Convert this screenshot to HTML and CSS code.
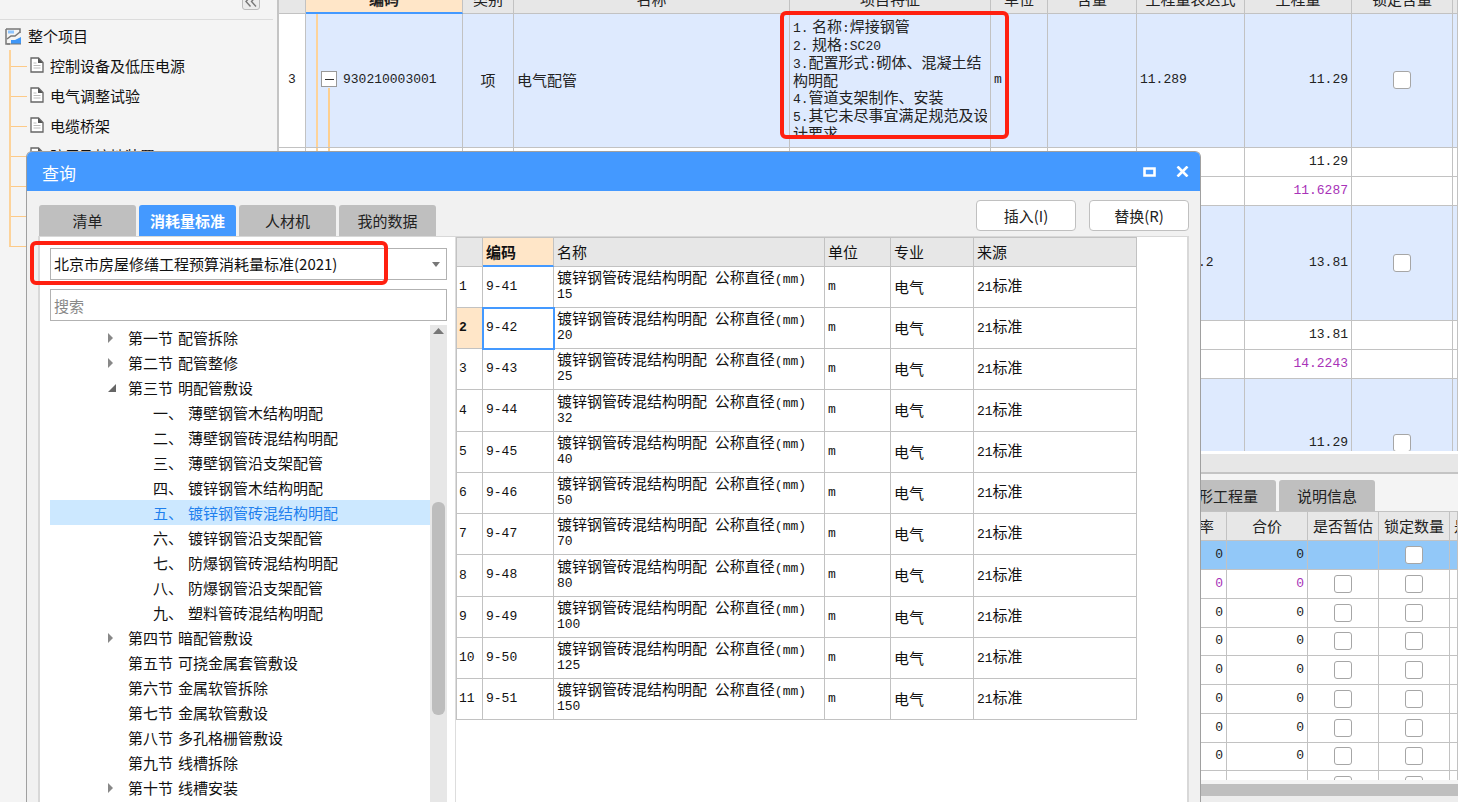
FILE: index.html
```html
<!DOCTYPE html>
<html lang="zh-CN">
<head>
<meta charset="utf-8">
<title>查询</title>
<link rel="stylesheet" href="styles.css">
</head>
<body>
<div class="app">
  <aside class="sidebar">
    <div class="sidebar-top">
      <button class="collapse" type="button" aria-label="收起">
        <svg width="14" height="14" viewBox="0 0 14 14" fill="none" stroke="#777" stroke-width="1.4"><path d="M6.500 1.500L2 6.500l4.500 5M12 1.500L7.500 6.500l4.500 5"/></svg>
      </button>
    </div>
    <div class="project">
      <svg width="17" height="17" viewBox="0 0 17 17"><path d="M1 1h14v4M1 1v15h4" fill="none" stroke="#777" stroke-width="1.500"/><path d="M3 2.500h6v3H3z" fill="#8cc4ff"/><path d="M2 11l4-3h4l5-4" fill="none" stroke="#777" stroke-width="1.500"/><path d="M6 16v-4h4l6-3v7z" fill="#3f97f8"/><path d="M2 16h14" stroke="#777"/></svg>
      <span>整个项目</span>
    </div>
    <ul class="project-tree">
      <li><svg class="doc" viewBox="0 0 14 16"><path d="M1 1h7.500L13 5.500V15H1z" fill="#fff" stroke="#666" stroke-width="1.300"/><path d="M8 1v5h5z" fill="#555"/><path d="M3.500 6h3M3.500 8.500h7M3.500 11h7" stroke="#bbb"/></svg>控制设备及低压电源</li>
      <li><svg class="doc" viewBox="0 0 14 16"><path d="M1 1h7.500L13 5.500V15H1z" fill="#fff" stroke="#666" stroke-width="1.300"/><path d="M8 1v5h5z" fill="#555"/><path d="M3.500 6h3M3.500 8.500h7M3.500 11h7" stroke="#bbb"/></svg>电气调整试验</li>
      <li><svg class="doc" viewBox="0 0 14 16"><path d="M1 1h7.500L13 5.500V15H1z" fill="#fff" stroke="#666" stroke-width="1.300"/><path d="M8 1v5h5z" fill="#555"/><path d="M3.500 6h3M3.500 8.500h7M3.500 11h7" stroke="#bbb"/></svg>电缆桥架</li>
      <li><svg class="doc" viewBox="0 0 14 16"><path d="M1 1h7.500L13 5.500V15H1z" fill="#fff" stroke="#666" stroke-width="1.300"/><path d="M8 1v5h5z" fill="#555"/><path d="M3.500 6h3M3.500 8.500h7M3.500 11h7" stroke="#bbb"/></svg>防雷及接地装置</li>
      <li></li>
      <li></li>
      <li></li>
    </ul>
  </aside>

  <main class="main">
    <div class="bill">
      <table class="grid bill-grid">
        <colgroup><col class="b-no"><col class="b-code"><col class="b-kind"><col><col class="b-feature"><col class="b-unit"><col class="b-content"><col class="b-expr"><col class="b-qty"><col class="b-lock"><col class="b-rest"></colgroup>
        <thead>
          <tr><th></th><th class="current">编码</th><th>类别</th><th>名称</th><th>项目特征</th><th>单位</th><th>含量</th><th>工程量表达式</th><th>工程量</th><th>锁定含量</th><th></th></tr>
        </thead>
        <tbody>
          <tr class="item first">
            <td class="rownum num">3</td>
            <td class="code num"><button class="toggle" type="button" aria-label="折叠"></button>930210003001</td>
            <td class="center">项</td><td>电气配管</td>
            <td class="feature">
              <div class="feature-text">
                <div><span class="num">1.</span> 名称<span class="num">:</span>焊接钢管</div>
                <div><span class="num">2.</span> 规格<span class="num">:SC20</span></div>
                <div><span class="num">3.</span>配置形式<span class="num">:</span>砌体、混凝土结</div>
                <div>构明配</div>
                <div><span class="num">4.</span>管道支架制作、安装</div>
                <div><span class="num">5.</span>其它未尽事宜满足规范及设</div>
                <div>计要求</div>
              </div>
              <div class="mark mark-feature"></div>
            </td>
            <td class="num">m</td><td></td><td class="num">11.289</td><td class="num right">11.29</td>
            <td class="center"><input type="checkbox" aria-label="锁定含量"></td><td></td>
          </tr>
          <tr class="sub"><td></td><td class="code"></td><td></td><td></td><td></td><td></td><td></td><td></td><td class="num right">11.29</td><td></td><td></td></tr>
          <tr class="sub"><td></td><td></td><td></td><td></td><td></td><td></td><td></td><td></td><td class="num right purple">11.6287</td><td></td><td></td></tr>
          <tr class="item second"><td class="rownum"></td><td></td><td></td><td></td><td></td><td></td><td></td><td class="num tail">.2</td><td class="num right">13.81</td><td class="center"><input type="checkbox" aria-label="锁定含量"></td><td></td></tr>
          <tr class="sub"><td></td><td></td><td></td><td></td><td></td><td></td><td></td><td></td><td class="num right">13.81</td><td></td><td></td></tr>
          <tr class="sub"><td></td><td></td><td></td><td></td><td></td><td></td><td></td><td></td><td class="num right purple">14.2243</td><td></td><td></td></tr>
          <tr class="item third"><td class="rownum"></td><td></td><td></td><td></td><td></td><td></td><td></td><td></td><td class="num right">11.29</td><td class="center"><input type="checkbox" aria-label="锁定含量"></td><td></td></tr>
        </tbody>
      </table>
    </div>
    <div class="bill-scroll"></div>
    <section class="detail">
      <div class="detail-tabs"><button type="button" class="tab">形工程量</button><button type="button" class="tab">说明信息</button></div>
      <div class="detail-view">
        <table class="grid detail-grid">
          <colgroup><col><col class="d-total"><col class="d-flag"><col class="d-lock"><col class="d-rest"></colgroup>
          <thead><tr><th class="rate">率</th><th>合价</th><th>是否暂估</th><th>锁定数量</th><th class="cut">是</th></tr></thead>
          <tbody>
            <tr class="active"><td class="num right">0</td><td class="num right">0</td><td></td><td class="center"><input type="checkbox" aria-label="锁定数量"></td><td></td></tr>
            <tr><td class="num right purple">0</td><td class="num right purple">0</td><td class="center"><input type="checkbox" aria-label="是否暂估"></td><td class="center"><input type="checkbox" aria-label="锁定数量"></td><td></td></tr>
            <tr><td class="num right">0</td><td class="num right">0</td><td class="center"><input type="checkbox" aria-label="是否暂估"></td><td class="center"><input type="checkbox" aria-label="锁定数量"></td><td></td></tr>
            <tr><td class="num right">0</td><td class="num right">0</td><td class="center"><input type="checkbox" aria-label="是否暂估"></td><td class="center"><input type="checkbox" aria-label="锁定数量"></td><td></td></tr>
            <tr><td class="num right">0</td><td class="num right">0</td><td class="center"><input type="checkbox" aria-label="是否暂估"></td><td class="center"><input type="checkbox" aria-label="锁定数量"></td><td></td></tr>
            <tr><td class="num right">0</td><td class="num right">0</td><td class="center"><input type="checkbox" aria-label="是否暂估"></td><td class="center"><input type="checkbox" aria-label="锁定数量"></td><td></td></tr>
            <tr><td class="num right">0</td><td class="num right">0</td><td class="center"><input type="checkbox" aria-label="是否暂估"></td><td class="center"><input type="checkbox" aria-label="锁定数量"></td><td></td></tr>
            <tr><td class="num right">0</td><td class="num right">0</td><td class="center"><input type="checkbox" aria-label="是否暂估"></td><td class="center"><input type="checkbox" aria-label="锁定数量"></td><td></td></tr>
            <tr><td></td><td></td><td class="center"><input type="checkbox" aria-label="是否暂估"></td><td class="center"><input type="checkbox" aria-label="锁定数量"></td><td></td></tr>
          </tbody>
        </table>
      </div>
      <div class="detail-scroll"></div>
    </section>
  </main>

  <section class="dialog" role="dialog" aria-labelledby="dialog-title">
    <header class="titlebar">
      <h1 id="dialog-title">查询</h1>
      <button type="button" class="win" aria-label="最大化"><svg width="13" height="10" viewBox="0 0 13 10"><path d="M1.500 1.500h10v7h-10z" fill="none" stroke="#fff" stroke-width="2.600"/></svg></button>
      <button type="button" class="win" aria-label="关闭"><svg width="13" height="11" viewBox="0 0 13 11"><path d="M1.500.500l10 10M11.500.500l-10 10" stroke="#fff" stroke-width="2.600"/></svg></button>
    </header>
    <div class="toolbar">
      <nav class="tabs"><button type="button" class="tab">清单</button><button type="button" class="tab selected">消耗量标准</button><button type="button" class="tab">人材机</button><button type="button" class="tab">我的数据</button></nav>
      <div class="actions"><button type="button">插入(I)</button><button type="button">替换(R)</button></div>
    </div>
    <div class="content">
      <div class="finder">
        <div class="picker">
          <select aria-label="消耗量标准"><option>北京市房屋修缮工程预算消耗量标准(2021)</option></select>
          <svg class="caret" width="8" height="5" viewBox="0 0 8 5"><path d="M0 0h8L4 5z" fill="#777"/></svg>
          <div class="mark mark-picker"></div>
        </div>
        <input class="search" type="text" placeholder="搜索" aria-label="搜索">
        <div class="tree-area">
          <ul class="tree">
            <li class="closed"><b>第一节</b>配管拆除</li>
            <li class="closed"><b>第二节</b>配管整修</li>
            <li class="open"><b>第三节</b>明配管敷设</li>
            <li class="leaf"><span>一、</span>薄壁钢管木结构明配</li>
            <li class="leaf"><span>二、</span>薄壁钢管砖混结构明配</li>
            <li class="leaf"><span>三、</span>薄壁钢管沿支架配管</li>
            <li class="leaf"><span>四、</span>镀锌钢管木结构明配</li>
            <li class="leaf chosen"><span>五、</span>镀锌钢管砖混结构明配</li>
            <li class="leaf"><span>六、</span>镀锌钢管沿支架配管</li>
            <li class="leaf"><span>七、</span>防爆钢管砖混结构明配</li>
            <li class="leaf"><span>八、</span>防爆钢管沿支架配管</li>
            <li class="leaf"><span>九、</span>塑料管砖混结构明配</li>
            <li class="closed"><b>第四节</b>暗配管敷设</li>
            <li><b>第五节</b>可挠金属套管敷设</li>
            <li><b>第六节</b>金属软管拆除</li>
            <li><b>第七节</b>金属软管敷设</li>
            <li><b>第八节</b>多孔格栅管敷设</li>
            <li><b>第九节</b>线槽拆除</li>
            <li class="closed"><b>第十节</b>线槽安装</li>
          </ul>
          <div class="scrollbar"><svg width="11" height="6" viewBox="0 0 11 6"><path d="M0 6h11L5.500 0z" fill="#777"/></svg><div class="thumb"></div></div>
        </div>
      </div>
      <div class="results">
        <table class="grid result-grid">
          <colgroup><col class="r-no"><col class="r-code"><col><col class="r-unit"><col class="r-major"><col class="r-source"></colgroup>
          <thead><tr><th></th><th class="current">编码</th><th>名称</th><th>单位</th><th>专业</th><th>来源</th></tr></thead>
          <tbody>
            <tr><td class="num no">1</td><td class="num">9-41</td><td class="name">镀锌钢管砖混结构明配<span class="num"> </span>公称直径<span class="num">(mm)</span><div class="num">15</div></td><td class="num">m</td><td>电气</td><td><span class="num">21</span>标准</td></tr>
            <tr class="picked"><td class="num no">2</td><td class="num">9-42</td><td class="name">镀锌钢管砖混结构明配<span class="num"> </span>公称直径<span class="num">(mm)</span><div class="num">20</div></td><td class="num">m</td><td>电气</td><td><span class="num">21</span>标准</td></tr>
            <tr><td class="num no">3</td><td class="num">9-43</td><td class="name">镀锌钢管砖混结构明配<span class="num"> </span>公称直径<span class="num">(mm)</span><div class="num">25</div></td><td class="num">m</td><td>电气</td><td><span class="num">21</span>标准</td></tr>
            <tr><td class="num no">4</td><td class="num">9-44</td><td class="name">镀锌钢管砖混结构明配<span class="num"> </span>公称直径<span class="num">(mm)</span><div class="num">32</div></td><td class="num">m</td><td>电气</td><td><span class="num">21</span>标准</td></tr>
            <tr><td class="num no">5</td><td class="num">9-45</td><td class="name">镀锌钢管砖混结构明配<span class="num"> </span>公称直径<span class="num">(mm)</span><div class="num">40</div></td><td class="num">m</td><td>电气</td><td><span class="num">21</span>标准</td></tr>
            <tr><td class="num no">6</td><td class="num">9-46</td><td class="name">镀锌钢管砖混结构明配<span class="num"> </span>公称直径<span class="num">(mm)</span><div class="num">50</div></td><td class="num">m</td><td>电气</td><td><span class="num">21</span>标准</td></tr>
            <tr><td class="num no">7</td><td class="num">9-47</td><td class="name">镀锌钢管砖混结构明配<span class="num"> </span>公称直径<span class="num">(mm)</span><div class="num">70</div></td><td class="num">m</td><td>电气</td><td><span class="num">21</span>标准</td></tr>
            <tr><td class="num no">8</td><td class="num">9-48</td><td class="name">镀锌钢管砖混结构明配<span class="num"> </span>公称直径<span class="num">(mm)</span><div class="num">80</div></td><td class="num">m</td><td>电气</td><td><span class="num">21</span>标准</td></tr>
            <tr><td class="num no">9</td><td class="num">9-49</td><td class="name">镀锌钢管砖混结构明配<span class="num"> </span>公称直径<span class="num">(mm)</span><div class="num">100</div></td><td class="num">m</td><td>电气</td><td><span class="num">21</span>标准</td></tr>
            <tr><td class="num no">10</td><td class="num">9-50</td><td class="name">镀锌钢管砖混结构明配<span class="num"> </span>公称直径<span class="num">(mm)</span><div class="num">125</div></td><td class="num">m</td><td>电气</td><td><span class="num">21</span>标准</td></tr>
            <tr><td class="num no">11</td><td class="num">9-51</td><td class="name">镀锌钢管砖混结构明配<span class="num"> </span>公称直径<span class="num">(mm)</span><div class="num">150</div></td><td class="num">m</td><td>电气</td><td><span class="num">21</span>标准</td></tr>
          </tbody>
        </table>
      </div>
    </div>
  </section>
</div>
</body>
</html>
```
FILE: styles.css
```css
* { box-sizing: border-box; }
body { margin: 0; font: 15px/20px "Noto Sans CJK SC", sans-serif; color: #222; }
button, input, select { font: inherit; color: inherit; margin: 0; }
button { padding: 0; border: 0; background: none; }
ul { list-style: none; margin: 0; padding: 0; }
svg { display: block; flex: none; }

.app { position: relative; display: flex; height: 100vh; overflow: hidden; background: #f4f4f4; }

/* project sidebar */
.sidebar { flex: none; width: 279px; border-right: 2px solid #c4c4c4; color: #111; }
.sidebar-top { display: flex; justify-content: flex-end; height: 20px; margin-right: 4px; padding-right: 13px; border-bottom: 1px solid #dcdcdc; }
.collapse { display: flex; align-items: flex-end; justify-content: center; width: 18px; height: 18px; margin-top: -8px; border: 1px solid #bbb; border-radius: 3px; background: #ececec; }
.project { display: flex; align-items: center; gap: 6px; height: 30px; padding: 2px 0 0 5px; }
.project-tree { padding-left: 9px; }
.project-tree li { position: relative; display: flex; align-items: center; gap: 6px; height: 30px; padding: 2px 0 0 21px; }
.project-tree li::before { content: ""; position: absolute; left: 0; top: 0; width: 16px; height: 16px; border-left: 2px solid #fdd39a; border-bottom: 1px solid #fdca88; }
.project-tree li:not(:last-child)::after { content: ""; position: absolute; left: 0; top: 16px; height: 14px; border-left: 2px solid #fdd39a; }
.doc { width: 14px; height: 16px; margin-bottom: 3px; }

/* shared data grid */
.grid { width: 100%; table-layout: fixed; border-collapse: separate; border-spacing: 0; white-space: nowrap; }
.grid th { height: 29px; padding: 0; border: solid #c2c2c2; border-width: 0 1px 1px 0; background: #e7e7e7; font-weight: 400; overflow: hidden; }
.grid td { height: 29px; padding: 0 3px 1px; border: solid #c2c2c2; border-width: 0 1px 1px 0; background: #fff; }
.grid th.current { background: #ffe6c8; border-bottom: 2px solid #4499ff; font-weight: 700; }
.num { font-family: "Liberation Mono", monospace; font-size: 13px; }
.grid .right { text-align: right; }
.grid .center { text-align: center; }
.grid .purple { color: #a833b8; }
input[type="checkbox"] { appearance: none; display: block; width: 18px; height: 18px; margin: 0 auto; border: 1px solid #a6a6a6; border-radius: 3px; background: #fff; }
.mark { position: absolute; border: 4px solid #ff2010; border-radius: 6px; pointer-events: none; }

/* bill of quantities */
.main { flex: 1; min-width: 0; display: flex; flex-direction: column; }
.bill { flex: 1; min-height: 0; overflow: hidden; background: #fff; }
.bill-grid { margin-top: -15px; }
.b-no { width: 27px; }
.b-code { width: 157px; }
.b-kind { width: 51px; }
.b-feature { width: 201px; }
.b-unit { width: 57px; }
.b-content { width: 89px; }
.b-expr { width: 108px; }
.b-qty { width: 107px; }
.b-lock { width: 101px; }
.b-rest { width: 5px; }
.item td { background: #deeafe; }
.item td.rownum { background: #fff; text-align: center; }
.first td { height: 134px; }
.second td { height: 115px; }
.third td { height: 130px; }
.grid td.tail { padding-left: 61px; }
.grid td.code { position: relative; padding-left: 37px; }
.code::before { content: ""; position: absolute; left: 10px; top: 0; bottom: 0; border-left: 2px solid #fdd39a; }
.code::after { content: ""; position: absolute; left: 22px; top: 0; bottom: 0; border-left: 2px solid #fdcf90; }
.first .code::after { top: 74px; }
.toggle { position: absolute; left: 15px; top: 57px; width: 16px; height: 16px; border: 1px solid #999; background: linear-gradient(#333, #333) center / 9px 1px no-repeat #fff; }
.grid td.feature { position: relative; padding-top: 3px; vertical-align: top; }
.feature-text { max-height: 120px; overflow: hidden; line-height: 17px; }
.feature-text .num { line-height: 1; }
.mark-feature { left: -10px; right: -19px; top: -3px; height: 128px; z-index: 1; }

/* lower panel */
.bill-scroll { flex: none; height: 23px; border-top: 3px solid #fff; border-bottom: 2px solid #c4c4c4; background: #e7e7e7; }
.detail { flex: none; }
.detail-tabs { display: flex; justify-content: flex-end; gap: 3px; padding: 6px 83px 0 0; }
.tab { height: 31px; border-radius: 3px 3px 0 0; background: #bfbfbf; }
.detail-tabs .tab { padding: 0 18px; }
.detail-view { height: 269px; overflow: hidden; border-top: 1px solid #c2c2c2; }
.detail-grid th { background: #e7e7e7; }
.detail-grid tr:nth-child(4n) td { height: 28px; }
.d-total { width: 81px; }
.d-flag, .d-lock { width: 71px; }
.d-rest { width: 8px; }
.grid th.rate { padding-right: 12px; text-align: right; }
.grid th.cut { padding-left: 4px; }
.active td { background: #92c8f8; }
.detail-scroll { height: 22px; border-top: 4px solid #f4f4f4; border-bottom: 6px solid #ededed; background: #bfbfbf; }

/* query dialog floating over the workspace */
.dialog { position: absolute; z-index: 2; left: 26px; right: 257px; top: 151px; bottom: 0; display: flex; flex-direction: column; border: 1px solid #a0a0a0; border-bottom: 0; border-radius: 6px 6px 0 0; background: #f1f1f1; }
.titlebar { display: flex; flex: none; align-items: center; gap: 20px; height: 39px; padding: 0 11px 0 15px; border-radius: 5px 5px 0 0; background: #4499ff; color: #fff; }
.titlebar h1 { flex: 1; margin: 0; padding-top: 3px; font-size: 17px; font-weight: 400; }
.toolbar { display: flex; flex: none; justify-content: space-between; height: 45px; padding: 0 11px 0 12px; }
.tabs { display: flex; align-items: flex-end; gap: 3px; }
.tabs .tab { width: 97px; }
.tabs .selected { background: #4499ff; color: #fff; font-weight: 700; }
.actions { display: flex; align-items: flex-start; gap: 13px; padding-top: 9px; }
.actions button { width: 100px; height: 31px; border: 1px solid #c0c0c0; border-radius: 4px; background: #fff; }
.content { display: flex; flex: 1; min-height: 0; margin: 0 11px; border: solid #d8d8d8; border-width: 1px 2px 0; background: #fff; }
.finder { display: flex; flex: none; flex-direction: column; gap: 9px; width: 416px; padding: 11px 8px 0 10px; border-right: 1px solid #ddd; color: #111; }
.picker { position: relative; }
.picker select { appearance: none; display: block; width: 100%; height: 32px; padding: 0 24px 0 3px; border: 1px solid #b2b2b2; border-radius: 0; background: #fff; }
.caret { position: absolute; right: 7px; top: 14px; }
.mark-picker { left: -20px; top: -7px; width: 358px; height: 44px; }
.search { width: 100%; height: 32px; padding: 0 3px; border: 1px solid #b2b2b2; }
.search::placeholder { color: #888; opacity: 1; }
.tree-area { display: flex; flex: 1; min-height: 0; margin-top: -5px; overflow: hidden; }
.tree { flex: 1; }
.tree li { position: relative; height: 25px; padding-left: 78px; line-height: 25px; white-space: pre; }
.tree .leaf { padding-left: 103px; }
.tree b { margin-right: 5px; font-weight: 400; }
.leaf span { display: inline-block; width: 35px; }
.tree .chosen { background: #cce8ff; color: #1f80ee; }
.tree .closed::before { content: ""; position: absolute; left: 58px; top: 8px; border: solid transparent; border-width: 5px 0 5px 5px; border-left-color: #888; }
.tree .open::before { content: ""; position: absolute; left: 58px; top: 9px; border: solid transparent; border-width: 8px 0 0 8px; border-top: 0; border-bottom: 8px solid #666; }
.scrollbar { display: flex; flex: none; flex-direction: column; align-items: center; width: 17px; padding-top: 3px; background: #e7e7e7; }
.thumb { width: 13px; height: 213px; margin-top: 168px; border-radius: 6px; background: #bdbdbd; }

.results { flex: 1; min-width: 0; padding-right: 50px; }
.result-grid { border-left: 1px solid #c2c2c2; border-top: 1px solid #c2c2c2; color: #111; }
.r-no { width: 26px; }
.r-code { width: 71px; }
.r-unit { width: 66px; }
.r-major { width: 83px; }
.r-source { width: 163px; }
.result-grid th { padding: 0 3px; text-align: left; }
.result-grid td { height: 41px; }
.result-grid tr:nth-child(4n) td { height: 42px; }
.result-grid td.no { padding: 0 2px; }
.result-grid td.name { padding-bottom: 3px; line-height: 17px; }
.name span.num { line-height: 1; white-space: pre; }
.picked td.no { background: #ffe6c8; font-weight: 700; }
.picked td:nth-child(2) { outline: 2px solid #4499ff; outline-offset: -1px; }
```
